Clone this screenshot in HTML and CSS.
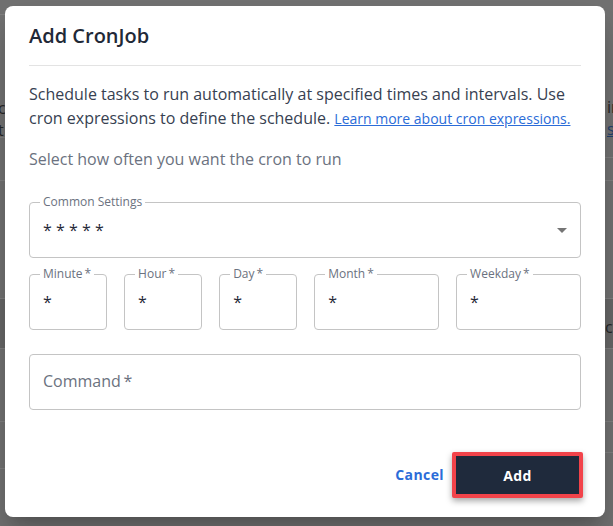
FILE: index.html
```html
<!DOCTYPE html>
<html lang="en">
<head>
<meta charset="utf-8">
<title>Add CronJob</title>
<link rel="stylesheet" href="styles.css">
</head>
<body>
<div class="backdrop">
  <div class="strip strip-left">
    <div class="bg-row l1"></div>
    <div class="bg-row l2"><div class="bg-text lt">c<br>t</div></div>
    <div class="bg-row l3"></div>
    <div class="bg-row l4"></div>
    <div class="bg-row l5 band"></div>
    <div class="bg-row l6"></div>
    <div class="bg-row l7"></div>
  </div>
  <div class="strip-gap"></div>
  <div class="strip strip-right">
    <div class="bg-row r1"><div class="bg-text rt">ir<br><span class="bg-link">s.</span></div></div>
    <div class="bg-row r2"></div>
    <div class="bg-row r3"></div>
    <div class="bg-row r4 band"><div class="bg-text rt2">ct</div></div>
    <div class="bg-row r5"></div>
    <div class="bg-row r6"></div>
  </div>
</div>

<div class="dialog" role="dialog" aria-labelledby="dlg-title">
  <div class="dialog-header">
    <h2 class="dialog-title" id="dlg-title">Add CronJob</h2>
  </div>
  <div class="dialog-body">
    <p class="desc">Schedule tasks to run automatically at specified times and intervals. Use cron expressions to define the schedule. <a href="#" class="desc-link">Learn more about cron expressions.</a></p>
    <p class="hint">Select how often you want the cron to run</p>

    <fieldset class="field select">
      <legend>Common Settings</legend>
      <div class="value select-value">
        <span>* * * * *</span>
        <svg class="caret" width="10" height="5" viewBox="0 0 10 5" aria-hidden="true"><path d="M0 0H10L5 5Z" fill="#757575"/></svg>
      </div>
    </fieldset>

    <div class="fields-grid">
      <fieldset class="field"><legend>Minute&thinsp;*</legend><div class="value">*</div></fieldset>
      <fieldset class="field"><legend>Hour&thinsp;*</legend><div class="value">*</div></fieldset>
      <fieldset class="field"><legend>Day&thinsp;*</legend><div class="value">*</div></fieldset>
      <fieldset class="field"><legend>Month&thinsp;*</legend><div class="value">*</div></fieldset>
      <fieldset class="field"><legend>Weekday&thinsp;*</legend><div class="value">*</div></fieldset>
    </div>

    <div class="command">Command&thinsp;*</div>
  </div>
  <div class="dialog-footer">
    <button class="btn-cancel" type="button">Cancel</button>
    <button class="btn-add" type="button">Add</button>
  </div>
</div>
</body>
</html>
```
FILE: styles.css
```css
html, body {
  margin: 0;
  padding: 0;
}
body {
  width: 613px;
  height: 526px;
  overflow: hidden;
  background: #717171;
  font-family: "Open Sans", "Noto Sans", sans-serif;
}

/* page behind the modal (dimmed) */
.backdrop {
  display: flex;
  height: 526px;
  overflow: hidden;
}
.strip {
  width: 20px;
  flex: 0 0 20px;
  overflow: hidden;
}
.strip-gap {
  flex: 1;
}
.bg-row {
  box-sizing: border-box;
  border-bottom: 1px solid #7f7f7f;
}
.band {
  background: #666666;
}
.l1 { height: 15px; }
.l2 { height: 123px; }
.l3 { height: 43px; }
.l4 { height: 118px; }
.l5 { height: 50px; }
.l6 { height: 73px; }
.l7 { height: 47px; }
.r1 { height: 158px; }
.r2 { height: 23px; }
.r3 { height: 118px; }
.r4 { height: 50px; }
.r5 { height: 73px; }
.r6 { height: 31px; }

.bg-text {
  font-size: 16px;
  line-height: 22px;
  color: #262626;
  white-space: nowrap;
}
.lt {
  padding-top: 82px;
  margin-left: -2px;
}
.rt {
  padding-top: 96px;
  padding-left: 14px;
}
.rt2 {
  padding-top: 17px;
  padding-left: 12px;
}
.bg-link {
  color: #233f6e;
  text-decoration: underline;
}

/* modal */
.dialog {
  position: absolute;
  left: 5px;
  top: 6px;
  width: 600px;
  height: 511px;
  box-sizing: border-box;
  background: #ffffff;
  border-radius: 8px;
  display: flex;
  flex-direction: column;
  box-shadow: 0 11px 15px -7px rgba(0, 0, 0, 0.2), 0 24px 38px 3px rgba(0, 0, 0, 0.14);
}
.dialog-header {
  padding: 0 24px;
}
.dialog-title {
  margin: 0;
  padding: 18px 0 17px;
  font-size: 20px;
  line-height: 24px;
  font-weight: 600;
  color: #1f2937;
  border-bottom: 1px solid #e3e3e3;
}
.dialog-body {
  padding: 0 24px;
}
.desc {
  margin: 16px 0 0;
  font-size: 16px;
  line-height: 24px;
  color: #374151;
}
.desc-link {
  font-size: 14px;
  color: #2b6cd8;
  text-decoration: underline;
}
.hint {
  margin: 16px 0 0;
  font-size: 16px;
  line-height: 24px;
  color: #6b7280;
}

.field {
  margin: 0;
  min-width: 0;
  border: 1px solid #c4c4c4;
  border-radius: 4px;
  padding: 8px 13px 15px;
}
.field legend {
  font-size: 12px;
  line-height: 16px;
  color: #6b7280;
  padding: 0 3px;
  margin-left: -3px;
  white-space: nowrap;
}
.value {
  font-size: 16px;
  line-height: 24px;
  color: #1f2937;
}
.select {
  margin-top: 23px;
}
.select-value {
  display: flex;
  align-items: center;
  justify-content: space-between;
}
.caret {
  display: block;
}
.fields-grid {
  display: grid;
  grid-template-columns: 1fr 1fr 1fr 1.6fr 1.6fr;
  gap: 17px;
  margin-top: 8px;
}
.command {
  margin-top: 24px;
  height: 56px;
  box-sizing: border-box;
  border: 1px solid #c4c4c4;
  border-radius: 4px;
  padding: 14px 13px 0;
  font-size: 16px;
  line-height: 24px;
  color: #6b7280;
}

.dialog-footer {
  margin-top: auto;
  display: flex;
  justify-content: flex-end;
  align-items: center;
  padding: 0 22px 19px 24px;
}
.btn-cancel {
  background: none;
  border: 0;
  padding: 0 8px;
  font-family: "Open Sans", "Noto Sans", sans-serif;
  font-size: 14px;
  line-height: 24px;
  font-weight: 700;
  letter-spacing: 0.4px;
  color: #2b6cd8;
  cursor: pointer;
}
.btn-add {
  width: 131px;
  height: 46px;
  box-sizing: border-box;
  background: #1f2a3c;
  border: 4px solid #f2434a;
  border-radius: 2px;
  color: #ffffff;
  font-family: "Open Sans", "Noto Sans", sans-serif;
  font-size: 14px;
  font-weight: 700;
  letter-spacing: 0.4px;
  box-shadow: 0 3px 6px rgba(0, 0, 0, 0.35);
  cursor: pointer;
}
```
